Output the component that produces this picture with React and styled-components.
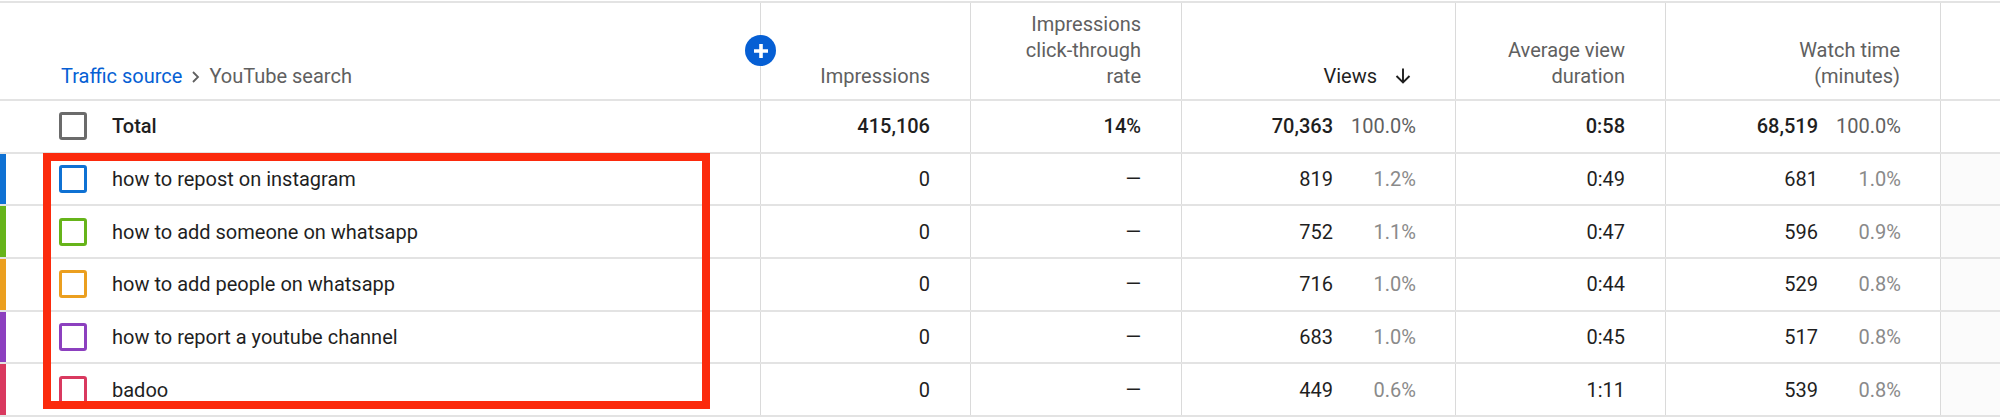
import React from 'react';
import styled, { createGlobalStyle } from 'styled-components';

const GlobalStyle = createGlobalStyle`
  html, body {
    margin: 0;
    padding: 0;
    background: #ffffff;
  }
  body {
    font-family: Roboto, "Noto Sans", "Liberation Sans", sans-serif;
    color: #1f1f1f;
  }
`;

const COLUMNS = '761px 210px 211px 274px 210px 275px 1fr';

const rows = [
  { query: 'how to repost on instagram', color: '#0f71d3', views: '819', viewsPct: '1.2%', avd: '0:49', watch: '681', watchPct: '1.0%' },
  { query: 'how to add someone on whatsapp', color: '#66b41a', views: '752', viewsPct: '1.1%', avd: '0:47', watch: '596', watchPct: '0.9%' },
  { query: 'how to add people on whatsapp', color: '#eb9f1f', views: '716', viewsPct: '1.0%', avd: '0:44', watch: '529', watchPct: '0.8%' },
  { query: 'how to report a youtube channel', color: '#8c40bf', views: '683', viewsPct: '1.0%', avd: '0:45', watch: '517', watchPct: '0.8%' },
  { query: 'badoo', color: '#d9395f', views: '449', viewsPct: '0.6%', avd: '1:11', watch: '539', watchPct: '0.8%' }
];

const App = () => (
  <Page>
    <GlobalStyle />
    <Table>
      <HeaderRow>
        <TitleCell>
          <Breadcrumb>
            <Crumb>Traffic source</Crumb>
            <svg width="9" height="14" viewBox="0 0 9 14">
              <path d="M2 2l5 5-5 5" fill="none" stroke="#606060" strokeWidth="1.8" />
            </svg>
            <Current>YouTube search</Current>
          </Breadcrumb>
          <AddButton>
            <svg width="16" height="16" viewBox="0 0 16 16">
              <path d="M8 1v14M1 8h14" stroke="#ffffff" strokeWidth="3.6" />
            </svg>
          </AddButton>
        </TitleCell>
        <HeaderCell>Impressions</HeaderCell>
        <HeaderCell>
          <span>Impressions</span>
          <span>click-through</span>
          <span>rate</span>
        </HeaderCell>
        <HeaderCell>
          <SortLabel>
            Views
            <svg width="24" height="24" viewBox="0 0 24 24">
              <path d="M12 4.5v14M5.5 12l6.5 6.5 6.5-6.5" fill="none" stroke="#1f1f1f" strokeWidth="1.9" />
            </svg>
          </SortLabel>
        </HeaderCell>
        <HeaderCell>
          <span>Average view</span>
          <span>duration</span>
        </HeaderCell>
        <HeaderCell>
          <span>Watch time</span>
          <span>(minutes)</span>
        </HeaderCell>
        <HeaderCell $last />
      </HeaderRow>

      <BodyRow>
        <NameCell>
          <Checkbox $color="#6b6b6b" $offset={59} />
          <Name $bold>Total</Name>
        </NameCell>
        <Cell $bold>415,106</Cell>
        <Cell $bold>14%</Cell>
        <Cell>
          <Strong>70,363</Strong>
          <Pct $total>100.0%</Pct>
        </Cell>
        <Cell $bold>0:58</Cell>
        <Cell>
          <Strong>68,519</Strong>
          <Pct $total>100.0%</Pct>
        </Cell>
        <Cell $last />
      </BodyRow>

      {rows.map((row) => (
        <BodyRow key={row.query}>
          <NameCell>
            <ColorBar $color={row.color} />
            <Checkbox $color={row.color} $offset={53} />
            <Name>{row.query}</Name>
          </NameCell>
          <Cell>0</Cell>
          <Cell>—</Cell>
          <Cell>
            {row.views}
            <Pct>{row.viewsPct}</Pct>
          </Cell>
          <Cell>{row.avd}</Cell>
          <Cell>
            {row.watch}
            <Pct>{row.watchPct}</Pct>
          </Cell>
          <Cell $last $shade />
        </BodyRow>
      ))}
    </Table>
    <Highlight />
  </Page>
);

const Page = styled.div`
  position: relative;
  width: 2000px;
  height: 419px;
  overflow: hidden;
  padding-top: 1px;
  box-sizing: border-box;
`;

const Table = styled.div`
  border-top: 2px solid #e3e3e3;
`;

const HeaderRow = styled.div`
  display: grid;
  grid-template-columns: ${COLUMNS};
  height: 98px;
  box-sizing: border-box;
  border-bottom: 2px solid #e3e3e3;
`;

const BodyRow = styled.div`
  display: grid;
  grid-template-columns: ${COLUMNS};
  height: 52.7px;
  box-sizing: border-box;
  border-bottom: 2px solid #e3e3e3;
`;

const HeaderCell = styled.div`
  display: flex;
  flex-direction: column;
  justify-content: flex-end;
  align-items: flex-end;
  padding: 0 40px 10px 0;
  border-right: ${(p) => (p.$last ? 'none' : '1px solid #dadada')};
  font-size: 20px;
  line-height: 26px;
  color: #606060;
  text-align: right;
`;

const TitleCell = styled.div`
  position: relative;
  display: flex;
  align-items: flex-end;
  padding: 0 0 10px 61px;
  border-right: 1px solid #dadada;
  font-size: 20px;
  line-height: 26px;
`;

const Breadcrumb = styled.div`
  display: flex;
  align-items: center;
  gap: 9px;

  svg {
    margin-top: 1px;
  }
`;

const Crumb = styled.span`
  color: #065fd4;
`;

const Current = styled.span`
  color: #606060;
`;

const AddButton = styled.div`
  position: absolute;
  top: 32px;
  right: -16px;
  width: 31px;
  height: 31px;
  border-radius: 50%;
  background: #065fd4;
  display: flex;
  align-items: center;
  justify-content: center;
  z-index: 1;
`;

const SortLabel = styled.div`
  display: flex;
  align-items: center;
  gap: 14px;
  color: #1f1f1f;
`;

const Cell = styled.div`
  display: flex;
  align-items: center;
  justify-content: flex-end;
  padding-right: ${(p) => (p.$last ? '0' : '40px')};
  border-right: ${(p) => (p.$last ? 'none' : '1px solid #dadada')};
  background: ${(p) => (p.$shade ? '#fbfbfb' : 'transparent')};
  font-size: 20px;
  font-weight: ${(p) => (p.$bold ? 500 : 400)};
  color: #1f1f1f;
`;

const Strong = styled.span`
  font-weight: 500;
`;

const Pct = styled.span`
  width: 68px;
  margin-left: 15px;
  text-align: right;
  color: ${(p) => (p.$total ? '#606060' : '#8a8a8a')};
  margin-right: -1px;
`;

const NameCell = styled.div`
  display: flex;
  align-items: center;
  border-right: 1px solid #dadada;
  font-size: 20px;
`;

const ColorBar = styled.div`
  width: 6px;
  align-self: stretch;
  background: ${(p) => p.$color};
`;

const Checkbox = styled.div`
  width: 28px;
  height: 28px;
  box-sizing: border-box;
  margin-left: ${(p) => p.$offset}px;
  border: 3px solid ${(p) => p.$color};
  border-radius: 3px;
  background: #ffffff;
`;

const Name = styled.span`
  margin-left: 25px;
  font-weight: ${(p) => (p.$bold ? 500 : 400)};
  color: #1f1f1f;
`;

const Highlight = styled.div`
  position: absolute;
  left: 43px;
  top: 153px;
  width: 667px;
  height: 256px;
  box-sizing: border-box;
  border: 8px solid #fb2a0c;
  pointer-events: none;
`;

export default App;
